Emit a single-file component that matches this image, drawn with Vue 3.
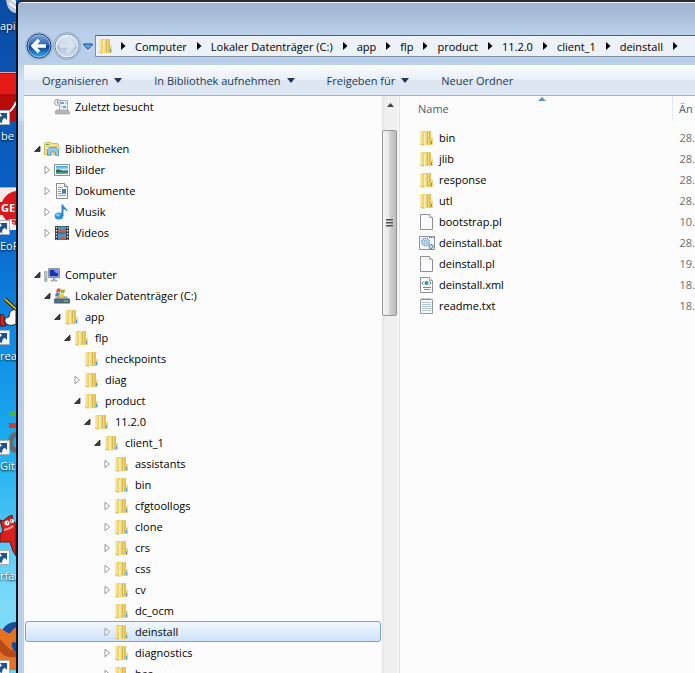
<template>
  <div class="desktop">
    <svg class="sprites" aria-hidden="true">
      <defs>
        <linearGradient id="gFolder" x1="0" x2="1">
          <stop offset="0" stop-color="#fbf0b4" />
          <stop offset="1" stop-color="#e2c457" />
        </linearGradient>
        <linearGradient id="gFlap" x1="0" x2="1">
          <stop offset="0" stop-color="#fdf5c4" />
          <stop offset=".6" stop-color="#efd778" />
          <stop offset="1" stop-color="#cfab3f" />
        </linearGradient>
        <linearGradient id="gSky" x1="0" y1="0" x2="0" y2="1">
          <stop offset="0" stop-color="#3a9ae0" />
          <stop offset=".5" stop-color="#d4f0fa" />
          <stop offset="1" stop-color="#2fa0d8" />
        </linearGradient>
        <linearGradient id="gBack" x1="0" y1="0" x2="0" y2="1">
          <stop offset="0" stop-color="#7fa7dc" />
          <stop offset=".45" stop-color="#2f66b4" />
          <stop offset=".5" stop-color="#0c3c8f" />
          <stop offset="1" stop-color="#35b5f5" />
        </linearGradient>
        <linearGradient id="gFwd" x1="0" y1="0" x2="0" y2="1">
          <stop offset="0" stop-color="#e2eaf4" />
          <stop offset=".48" stop-color="#c8d5e5" />
          <stop offset=".52" stop-color="#b3c4d9" />
          <stop offset="1" stop-color="#d3e0ef" />
        </linearGradient>
      </defs>
      <symbol id="i-folder" viewBox="0 0 16 16">
        <path d="M1 1h5v14H3l-2-1z" fill="url(#gFolder)" />
        <path d="M6 1h6v14H6z" fill="#edd67c" />
        <path d="M10 1h2v14h-2z" fill="#e0c25a" />
        <path d="M5 2.500L9 1v13l-3 2-1-1z" fill="url(#gFlap)" />
        <path d="M12 8h2v7h-2z" fill="#ecd887" />
        <path d="M12 11h1v3h-1z" fill="#3f9bdc" />
        <path d="M1 14l2 1h2" fill="none" stroke="#cfae4a" stroke-width=".8" />
      </symbol>
      <symbol id="i-recent" viewBox="0 0 16 16">
        <path d="M5.500 1.500h8v10h-8z" fill="#eef3f7" stroke="#a5acb2" />
        <path d="M7 4h3M9 8h3" stroke="#5aa6dc" stroke-width="2" />
        <path d="M11 4h1.500M7 7.500h1" stroke="#8b9aa6" />
        <path d="M2 11h12l1.500 2v2h-14v-2z" fill="#b4b8bb" stroke="#8f9498" stroke-width=".6" />
        <circle cx="3.500" cy="3.500" r="3" fill="#f4f6f8" stroke="#8d949b" />
        <path d="M3.500 1.500v2.500h1.800" fill="none" stroke="#5c646b" stroke-width=".8" />
      </symbol>
      <symbol id="i-library" viewBox="0 0 16 16">
        <path d="M.5 2.500l1-1h5l1 1h6l1 1v10H.5z" fill="#f4df8a" stroke="#cdaa43" stroke-width=".8" />
        <path d="M2 3.500h3" stroke="#53a94b" />
        <path d="M1 5.500h14.500v3H1z" fill="#fbf0b8" stroke="#d9bd60" stroke-width=".6" />
        <path d="M3.500 14.500V8.500l2-2h7l2 2v6h-3v-3.500h-5v3.500z" fill="#8cc9ee" stroke="#4a97cd" stroke-width=".8" />
      </symbol>
      <symbol id="i-pictures" viewBox="0 0 16 16">
        <path d="M.5 2.500h15v11H.5z" fill="#fdfdfd" stroke="#8a9299" />
        <path d="M2 4h12v8H2z" fill="url(#gSky)" />
        <path d="M2 8c2-2 4 0 6 .5s4 0 6 0v2H2z" fill="#27733d" />
      </symbol>
      <symbol id="i-document" viewBox="0 0 16 16">
        <path d="M2.500.5h8l3 3v12h-11z" fill="#fbfcfd" stroke="#868d94" />
        <path d="M10.500.5v3h3" fill="#dfe5ea" stroke="#868d94" />
        <path d="M4 4.500h5M4 6.500h3M4 8.500h3M4 10.500h8M4 12.500h8" stroke="#7b95b4" stroke-width=".9" />
        <path d="M8 6h4v4H8z" fill="#3f7fc4" />
      </symbol>
      <symbol id="i-music" viewBox="0 0 16 16">
        <ellipse cx="5" cy="12" rx="4.300" ry="3.500" fill="#2c93dd" />
        <ellipse cx="4" cy="11" rx="2" ry="1.400" fill="#85cdf7" />
        <path d="M7.500 12V.5h1.600c.5 3 4.800 3.500 4.400 8-1-2.500-2.500-3-4-3.300V12z" fill="#2587d2" />
      </symbol>
      <symbol id="i-video" viewBox="0 0 16 16">
        <path d="M1 1h14v14H1z" fill="#33393f" />
        <path d="M4 1.500h8v6H4zM4 8.500h8v6H4z" fill="#3d9ddf" />
        <path d="M4 5l3-2 2 2 3-3v5.500H4zM5 14l3-4 3 2v2.500H5z" fill="#b4694e" />
        <path d="M2.500 2v12.500M13.500 2v12.500" stroke="#e7eaec" stroke-width="1.400" stroke-dasharray="1.500 1.500" />
      </symbol>
      <symbol id="i-computer" viewBox="0 0 16 16">
        <path d="M.7 4.500h2.200v10H.7z" fill="#c4cbd1" stroke="#7d858d" stroke-width=".6" />
        <path d="M1.300 12h1" stroke="#3ec04b" />
        <path d="M4.500 1.500h11v9h-11z" fill="#e6e9ec" stroke="#8c939b" />
        <path d="M5.500 2.500h9v7h-9z" fill="#1834b4" />
        <path d="M9.500 2.500h5v4c-2 0-4-1-5-4z" fill="#7593ee" />
        <path d="M8.500 11h3v2h2v1.500h-7V13h2z" fill="#a6adb4" />
      </symbol>
      <symbol id="i-drive" viewBox="0 0 16 16">
        <path d="M3 8h9l3.500 3v4.500H.5V11z" fill="#a3b1b9" />
        <path d="M.5 11h15v4H.5z" fill="#55707c" stroke="#3e4f58" stroke-width=".6" />
        <path d="M10 13h4" stroke="#49df6b" stroke-width="1.200" />
        <path d="M2.800 1c1.500-1 2.500-.8 4 0L6 4.500c-1.200-.8-2.500-.8-4 0z" fill="#ea5a29" />
        <path d="M7.300 1.300c1.500.8 2.700.7 4 0l-1 3.500c-1.300.7-2.500.7-3.800 0z" fill="#7dbb3c" />
        <path d="M1.800 5.200c1.500-.8 2.700-.8 4 0L5 8.500c-1.300-.8-2.500-.7-4 0z" fill="#3d86d4" />
        <path d="M6.300 5.500c1.300.7 2.500.7 3.800 0L9.300 9c-1.300.7-2.500.7-3.800 0z" fill="#f9c734" />
      </symbol>
      <symbol id="i-file" viewBox="0 0 16 16">
        <path d="M1.500.5h9l3 3v12h-12z" fill="#fcfcfc" stroke="#8e9296" />
        <path d="M10.500.5v3h3" fill="#e8eaec" stroke="#a3a7ab" />
      </symbol>
      <symbol id="i-bat" viewBox="0 0 16 16">
        <path d="M.5 1.500h15v13H.5z" fill="#f6f9fc" stroke="#8b949e" />
        <path d="M10 2.500h5" stroke="#3f68a8" stroke-dasharray="1 1" />
        <circle cx="6.500" cy="7" r="3.600" fill="none" stroke="#5d8dbd" stroke-width="1.400" stroke-dasharray="1.400 .6" />
        <circle cx="6.500" cy="7" r="1.600" fill="#fff" stroke="#5d8dbd" />
        <circle cx="12" cy="11.500" r="2" fill="#dce9f5" stroke="#4279b2" stroke-width="1.300" stroke-dasharray="1.200 .5" />
      </symbol>
      <symbol id="i-xml" viewBox="0 0 16 16">
        <path d="M1.500.5h9l3 3v12h-12z" fill="#fcfcfc" stroke="#8e9296" />
        <path d="M10.500.5v3h3" fill="#e8eaec" stroke="#a3a7ab" />
        <path d="M4.500 4.500L3 6l1.500 1.500M10.500 4.500L12 6l-1.500 1.500" fill="none" stroke="#3b5a94" stroke-width=".9" />
        <circle cx="7.500" cy="6" r="2" fill="#239a9c" />
        <path d="M4 10.500h8M5 12.500h6" stroke="#8080b0" />
      </symbol>
      <symbol id="i-text" viewBox="0 0 16 16">
        <path d="M1.500 1.500h12v14h-12z" fill="#f7fafc" stroke="#93999e" />
        <path d="M2.500 1h10" stroke="#7d8388" stroke-width="1.500" stroke-dasharray="1 1" />
        <path d="M3 4.500h9M3 6.500h9M3 8.500h9M3 10.500h9M3 12.500h9" stroke="#b3c6d5" />
      </symbol>
    </svg>

    <!-- desktop shortcuts peeking out behind the window -->
    <aside class="shortcuts">
      <svg class="shortcut-art" width="16" height="673" viewBox="0 0 16 673" aria-hidden="true">
        <path d="M6 0h10v13c-5 0-9-5-10-13z" fill="#c4cdd3" />
        <path d="M9 3l7 5M12 0l4 3" stroke="#f4f7f8" stroke-width="2" />
        <path d="M0 72h16v49H0z" fill="#b80c0c" />
        <path d="M0 74h16v20H0z" fill="#e61a16" />
        <path d="M0 72.500h16" stroke="#e9a5a8" />
        <path d="M7 113c4-2 7-6 9-11" fill="none" stroke="#fff" stroke-width="2" />
        <path d="M0 187h16v43H0z" fill="#fbe9e9" />
        <path d="M0 187.500h16" stroke="#e59aa0" />
        <circle cx="18" cy="208" r="17" fill="#d8181b" />
        <path d="M0 202h16v13H0z" fill="#d8181b" />
        <path d="M5 299l11 10" stroke="#3b3517" stroke-width="4" />
        <path d="M5 299l11 10" stroke="#e5cf31" stroke-width="1.500" />
        <path d="M0 315c4-2 5 2 4 6l2 5H0z" fill="#e31b1d" stroke="#222" />
        <path d="M5 322c-1-4 3-5 4-5 0-7 5-8 7-7v14c-4 2-9 2-11-2z" fill="#fff" stroke="#222" />
        <path d="M9 411h7v5H9z" fill="#45b649" />
        <path d="M9 423h7v5H9z" fill="#d8352d" />
        <path d="M16 434c-7 2-7 14 0 17" fill="none" stroke="#646a70" stroke-width="5" />
        <path d="M0 520l3 1 5-4 4-2 1 5 3 4v32l-3-5-3-9H0v-8l3-3z" fill="#d8201e" stroke="#64110f" />
        <circle cx="7" cy="523" r="2.500" fill="#fff" />
        <circle cx="12" cy="521" r="2" fill="#fff" />
        <path d="M7 523h1M11 521h1" stroke="#222" />
        <path d="M4 530c4-1 7-2 9-4" fill="none" stroke="#f5a1a0" stroke-width="2" />
        <path d="M16 622c-7 0-12 4-14 9l5 20h9z" fill="#174d9f" />
        <path d="M0 628c5 3 8 6 10 5s4-6 6-5v15c-3-3-5 0-4 4l4 8v15H0z" fill="#e77122" />
        <path d="M0 639c4 4 9 12 16 12v6C8 658 3 656 0 651z" fill="#b74b18" />
        <g v-for="y in overlays" :key="y" :transform="`translate(0 ${y})`">
          <path d="M-6 .5H9.500v14H-6z" fill="#f6f8fa" stroke="#a4acb4" />
          <path d="M-1 12c0-4 1-6 3-6l-2-3h7v7L5 8c-2 0-3 2-3 5z" fill="#20528f" />
        </g>
      </svg>
      <span class="logo-text logo-ge">GE</span>
      <span class="logo-text logo-f">F</span>
      <a v-for="s in shortcuts" :key="s.label" class="shortcut" href="#" :style="{ left: s.x + 'px', top: s.y + 'px' }">{{ s.label }}</a>
    </aside>

    <main class="window">
      <div class="titlebar"></div>

      <nav class="navbar">
        <div class="travel">
          <button class="round" aria-label="Zurück">
            <svg width="26" height="26" viewBox="0 0 26 26">
              <circle cx="13" cy="13" r="12" fill="url(#gBack)" stroke="#17365f" />
              <circle cx="13" cy="13" r="11" fill="none" stroke="#b5d6f4" stroke-opacity=".7" />
              <path d="M20 13H8M13 7l-6 6 6 6" fill="none" stroke="#fff" stroke-width="3.400" />
            </svg>
          </button>
          <button class="round" aria-label="Vorwärts">
            <svg width="26" height="26" viewBox="0 0 26 26">
              <circle cx="13" cy="13" r="12" fill="url(#gFwd)" stroke="#7a8ba3" />
              <circle cx="13" cy="13" r="11" fill="none" stroke="#eef4fa" />
              <path d="M6 13h12M13 7l6 6-6 6" fill="none" stroke="#d9e3ef" stroke-width="3.400" />
            </svg>
          </button>
          <button class="history" aria-label="Zuletzt besuchte Seiten">
            <svg width="10" height="7" viewBox="0 0 10 7">
              <path d="M.8 1h8.400v1L5 6.200.8 2z" fill="#5aa9e6" stroke="#1d4a80" />
            </svg>
          </button>
        </div>
        <div class="address">
          <svg class="icon"><use href="#i-folder" /></svg>
          <svg class="crumb-arrow" viewBox="0 0 6 8"><path d="M1 0l4.500 4L1 8z" /></svg>
          <template v-for="c in crumbs" :key="c">
            <a class="crumb" href="#">{{ c }}</a>
            <svg class="crumb-arrow" viewBox="0 0 6 8"><path d="M1 0l4.500 4L1 8z" /></svg>
          </template>
        </div>
      </nav>

      <section class="client">
        <div class="toolbar">
          <button v-for="t in tools" :key="t.label" class="tool">
            {{ t.label }}
            <svg v-if="t.menu" width="8" height="5" viewBox="0 0 8 5"><path d="M0 0h8L4 5z" fill="#1e395b" /></svg>
          </button>
        </div>

        <div class="panes">
          <ul class="tree">
            <li
              v-for="(n, i) in nodes"
              :key="i"
              class="node"
              :class="{ selected: n.selected }"
              :style="{ '--level': n.level }"
            >
              <template v-if="n.label">
                <button v-if="n.state" class="expander" :aria-label="n.label">
                  <svg v-if="n.state === 'open'" width="8" height="8" viewBox="0 0 8 8">
                    <path d="M7 1v5.500H1.500z" fill="#3c3c3c" stroke="#262626" stroke-width=".8" />
                  </svg>
                  <svg v-else width="8" height="10" viewBox="0 0 8 10">
                    <path d="M2 1.200v7.600L6.500 5z" fill="#fff" stroke="#9a9a9a" />
                  </svg>
                </button>
                <span v-else class="expander"></span>
                <svg class="icon"><use :href="'#i-' + n.icon" /></svg>
                <span class="node-label">{{ n.label }}</span>
              </template>
            </li>
          </ul>

          <div class="scrollbar">
            <button class="scroll-up" aria-label="Nach oben">
              <svg width="7" height="4" viewBox="0 0 7 4"><path d="M3.500 0L7 4H0z" fill="#444" /></svg>
            </button>
            <div class="thumb"><i></i><i></i><i></i></div>
          </div>

          <div class="files">
            <table>
              <thead>
                <tr>
                  <th class="col-name">
                    Name
                    <svg class="sort" width="8" height="4" viewBox="0 0 8 4"><path d="M4 0l4 4H0z" fill="#5f93b4" /></svg>
                  </th>
                  <th class="col-date">Än</th>
                </tr>
              </thead>
              <tbody>
                <tr v-for="f in files" :key="f.name">
                  <td>
                    <div class="file">
                      <svg class="icon"><use :href="'#i-' + f.icon" /></svg>
                      <span>{{ f.name }}</span>
                    </div>
                  </td>
                  <td class="date">{{ f.date }}</td>
                </tr>
              </tbody>
            </table>
          </div>
        </div>
      </section>
    </main>
  </div>
</template>

<script setup>
const shortcuts = [
  { label: 'api', x: 0, y: 18 },
  { label: 'be', x: 1, y: 128 },
  { label: 'EoF', x: 0, y: 238 },
  { label: 'rea', x: 0, y: 348 },
  { label: 'Git', x: 0, y: 458 },
  { label: 'rfar', x: 0, y: 568 },
]
// y of the small link arrow on each shortcut
const overlays = [110, 220, 330, 440, 550, 660]

const crumbs = ['Computer', 'Lokaler Datenträger (C:)', 'app', 'flp', 'product', '11.2.0', 'client_1', 'deinstall']

const tools = [
  { label: 'Organisieren', menu: true },
  { label: 'In Bibliothek aufnehmen', menu: true },
  { label: 'Freigeben für', menu: true },
  { label: 'Neuer Ordner', menu: false },
]

const node = (level, label, state = '', icon = 'folder') => ({ level, label, state, icon })

const nodes = [
  node(1, 'Zuletzt besucht', '', 'recent'),
  node(0, ''),
  node(0, 'Bibliotheken', 'open', 'library'),
  node(1, 'Bilder', 'closed', 'pictures'),
  node(1, 'Dokumente', 'closed', 'document'),
  node(1, 'Musik', 'closed', 'music'),
  node(1, 'Videos', 'closed', 'video'),
  node(0, ''),
  node(0, 'Computer', 'open', 'computer'),
  node(1, 'Lokaler Datenträger (C:)', 'open', 'drive'),
  node(2, 'app', 'open'),
  node(3, 'flp', 'open'),
  node(4, 'checkpoints'),
  node(4, 'diag', 'closed'),
  node(4, 'product', 'open'),
  node(5, '11.2.0', 'open'),
  node(6, 'client_1', 'open'),
  node(7, 'assistants', 'closed'),
  node(7, 'bin'),
  node(7, 'cfgtoollogs', 'closed'),
  node(7, 'clone', 'closed'),
  node(7, 'crs', 'closed'),
  node(7, 'css', 'closed'),
  node(7, 'cv', 'closed'),
  node(7, 'dc_ocm'),
  { ...node(7, 'deinstall', 'closed'), selected: true },
  node(7, 'diagnostics', 'closed'),
  node(7, 'has', 'closed'),
]

const files = [
  { name: 'bin', icon: 'folder', date: '28.' },
  { name: 'jlib', icon: 'folder', date: '28.' },
  { name: 'response', icon: 'folder', date: '28.' },
  { name: 'utl', icon: 'folder', date: '28.' },
  { name: 'bootstrap.pl', icon: 'file', date: '10.' },
  { name: 'deinstall.bat', icon: 'bat', date: '28.' },
  { name: 'deinstall.pl', icon: 'file', date: '19.' },
  { name: 'deinstall.xml', icon: 'xml', date: '18.' },
  { name: 'readme.txt', icon: 'text', date: '18.' },
]
</script>

<style>
body {
  margin: 0;
  overflow: hidden;
}
</style>

<style scoped>
.desktop {
  display: flex;
  height: 100vh;
  overflow: hidden;
  background: linear-gradient(#0b4ba3, #0a62c8 32%, #0f8fe6 52%, #1fb0f0 68%, #7fdcfa 90%, #6cd2f6);
  font: 11px/21px "Open Sans", "Noto Sans", sans-serif;
  color: #000;
}
.sprites { position: absolute; width: 0; height: 0; }
button {
  all: unset;
  box-sizing: border-box;
}
a { color: inherit; text-decoration: none; }
svg { display: block; flex: none; }
.icon { width: 16px; height: 16px; }

/* desktop strip */
.shortcuts {
  position: relative;
  flex: 0 0 16px;
  overflow: hidden;
}
.shortcut-art { position: absolute; left: 0; top: 0; }
.shortcut {
  position: absolute;
  line-height: 16px;
  white-space: nowrap;
  color: #fff;
  text-shadow: 0 1px 2px #000;
}
.logo-text {
  position: absolute;
  color: #fff;
  font-weight: 700;
}
.logo-ge { left: 1px; top: 202px; font-size: 11px; line-height: 12px; }
.logo-f { left: 9px; top: 216px; font-family: "Liberation Serif", serif; font-size: 11px; line-height: 12px; }

/* window frame */
.window {
  flex: 1;
  min-width: 0;
  display: flex;
  flex-direction: column;
  box-sizing: border-box;
  border-left: 2px solid #10161e;
  border-top: 2px solid #2c2c32;
  border-top-left-radius: 6px;
  padding-left: 6px;
  background: linear-gradient(#9db3cf, #bbd0ea 32px, #b9cfe9 60px, #d3e2f3 80px, #d3e2f3 117px, #bbd1e9 120px);
  box-shadow: inset 0 1px #e8f0f8;
}
.titlebar { flex: 0 0 30px; }
.navbar {
  display: flex;
  align-items: center;
  flex: 0 0 28px;
  margin-bottom: 5px;
}
.travel {
  display: flex;
  align-items: center;
  flex: 0 0 69px;
  gap: 2px;
  margin-left: 2px;
}
.round {
  border-radius: 50%;
  box-shadow: 0 0 0 1px rgba(122, 142, 170, .45);
}
.history { margin-left: 1px; }
.address {
  flex: 1;
  display: flex;
  align-items: center;
  gap: 9px;
  height: 22px;
  box-sizing: border-box;
  padding-left: 2px;
  overflow: hidden;
  white-space: nowrap;
  background: #edf1f8;
  border: 1px solid #7d8ea5;
  border-top-color: #4f5d70;
  border-right: none;
}
.address .icon { margin-right: -3px; }
.crumb-arrow { width: 6px; height: 8px; }

/* client area */
.client {
  flex: 1;
  min-height: 0;
  display: flex;
  flex-direction: column;
  background: #fcfcfc;
}
.toolbar {
  display: flex;
  align-items: center;
  gap: 32px;
  flex: 0 0 31px;
  box-sizing: border-box;
  padding-left: 18px;
  background: linear-gradient(#fafcfe, #e8f0f9 48%, #dce6f1 52%, #dde8f4);
  border-bottom: 1px solid #a0afc3;
  color: #1e395b;
}
.tool {
  display: flex;
  align-items: center;
  gap: 6px;
  white-space: nowrap;
}
.panes {
  flex: 1;
  min-height: 0;
  display: flex;
}

.tree {
  flex: 0 0 358px;
  box-sizing: border-box;
  margin: 0;
  padding: 0 1px;
  overflow: hidden;
  list-style: none;
}
.node {
  display: flex;
  align-items: center;
  height: 21px;
  box-sizing: border-box;
  padding-left: calc(6px + var(--level) * 10px);
  border: 1px solid transparent;
  border-radius: 3px;
}
.node.selected {
  border-color: #7da2ce;
  background: linear-gradient(#f2f8fe, #cfe3fb);
}
.expander { flex: 0 0 10px; margin-right: 2px; }
.expander svg { margin: 0 auto; }
.node-label { margin-left: 5px; white-space: nowrap; }

.scrollbar {
  flex: 0 0 16px;
  display: flex;
  flex-direction: column;
  background: linear-gradient(90deg, #e6e6e6, #f0f0f0 4px, #f0f0f0);
}
.scroll-up {
  display: flex;
  align-items: center;
  justify-content: center;
  height: 18px;
  margin-bottom: 16px;
}
.thumb {
  display: flex;
  flex-direction: column;
  align-items: center;
  justify-content: center;
  gap: 1px;
  height: 186px;
  box-sizing: border-box;
  margin-right: 1px;
  border: 1px solid #979797;
  border-radius: 2px;
  background: linear-gradient(90deg, #f4f4f4, #e6e6e6 45%, #cfcfcf 55%, #bdbdbd);
}
.thumb i {
  width: 7px;
  height: 2px;
  background: linear-gradient(#4f4f4f 50%, #9a9a9a 50%);
}

.files {
  flex: 1;
  min-width: 0;
  overflow: hidden;
  margin-left: 1px;
  border-left: 1px solid #d6e5f5;
  padding-left: 12px;
}
table {
  width: 100%;
  table-layout: fixed;
  border-collapse: collapse;
}
th, td { padding: 0; text-align: left; white-space: nowrap; }
th {
  position: relative;
  height: 25px;
  padding-left: 6px;
  font-weight: 400;
  color: #4c607a;
}
thead::after {
  content: "";
  display: block;
  height: 6px;
}
.col-name { width: 254px; }
.col-date { border-left: 1px solid #e3ecf6; }
.sort { position: absolute; left: 50%; top: 1px; margin-left: -4px; }
.file {
  display: flex;
  align-items: center;
  gap: 4px;
  height: 21px;
  padding-left: 7px;
}
.date { padding-left: 7px; color: #6d6d6d; }
</style>
